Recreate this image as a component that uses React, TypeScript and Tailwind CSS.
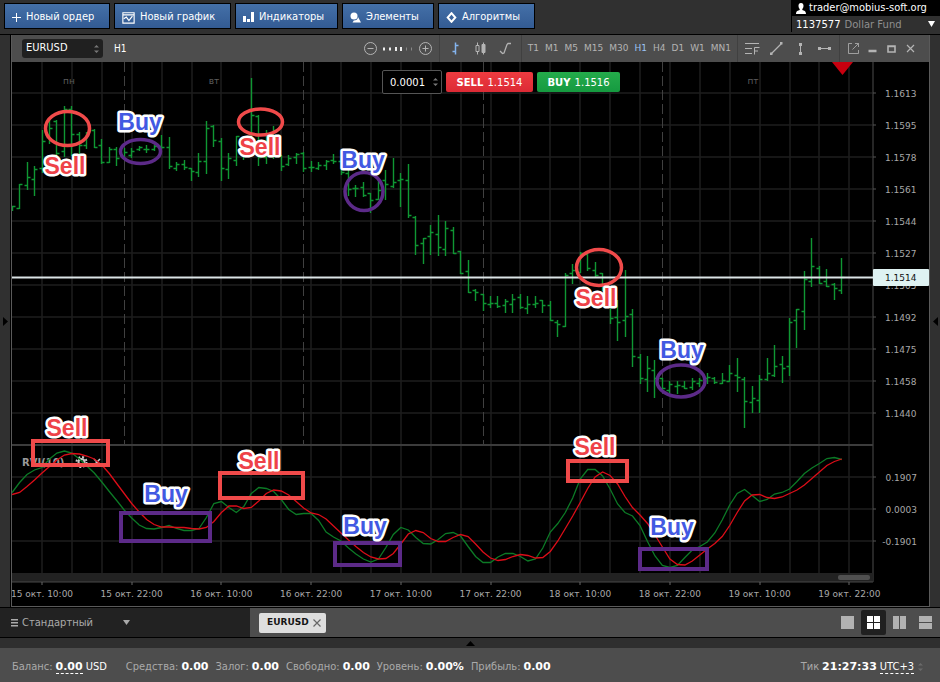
import clsx from 'clsx'
import React from 'react'

type Bar = [open: number, high: number, low: number, close: number]

// Distance between two bars and the x of the first one
const STEP = 7.475
const FIRST_X = 12.1

const bars: Bar[] = [
  [206, 206, 210, 206], [208, 184, 208, 184], [185, 162, 189, 177], [179, 166, 195, 169],
  [168, 130, 172, 141], [137, 120, 143, 128], [121, 120, 155, 153], [151, 106, 156, 109],
  [109, 106, 155, 134], [134, 132, 154, 145], [145, 132, 148, 133], [130, 129, 147, 147],
  [145, 139, 163, 162], [162, 147, 162, 149], [149, 147, 165, 158], [157, 148, 157, 152],
  [155, 148, 157, 151], [149, 146, 150, 147], [149, 145, 152, 149], [149, 145, 150, 146],
  [146, 135, 148, 147], [147, 137, 168, 166], [168, 162, 170, 164], [164, 160, 169, 167],
  [168, 168, 180, 171], [172, 153, 176, 161], [161, 121, 173, 128], [126, 125, 146, 140],
  [141, 138, 180, 168], [169, 153, 178, 158], [160, 136, 165, 136], [143, 143, 159, 150],
  [150, 78, 150, 115], [116, 115, 165, 157], [157, 130, 163, 150], [150, 126, 158, 130],
  [155, 155, 170, 166], [164, 155, 165, 158], [157, 153, 163, 154], [153, 152, 171, 168],
  [167, 161, 171, 167], [168, 162, 169, 165], [165, 160, 169, 161], [160, 154, 163, 161],
  [161, 161, 174, 172], [173, 166, 195, 189], [188, 185, 196, 188], [187, 182, 196, 195],
  [193, 193, 212, 200], [199, 178, 199, 190], [180, 170, 199, 184], [186, 158, 187, 182],
  [180, 173, 206, 179], [180, 164, 217, 215], [217, 216, 254, 245], [243, 238, 263, 238],
  [236, 225, 254, 232], [234, 215, 255, 247], [249, 221, 255, 228], [230, 227, 253, 253],
  [251, 251, 273, 273], [271, 260, 292, 292], [290, 289, 300, 292], [294, 294, 310, 303],
  [304, 296, 307, 303], [303, 296, 307, 306], [305, 299, 312, 301], [304, 294, 312, 299],
  [297, 294, 308, 307], [308, 296, 313, 304], [304, 296, 307, 303], [300, 300, 312, 305],
  [305, 301, 320, 320], [322, 320, 336, 324], [326, 273, 326, 275], [273, 264, 283, 270],
  [272, 252, 272, 253], [254, 252, 270, 268], [270, 262, 276, 275], [273, 273, 290, 288],
  [288, 288, 323, 318], [317, 300, 340, 322], [320, 270, 336, 316], [314, 309, 366, 356],
  [357, 354, 383, 378], [379, 356, 391, 368], [370, 360, 397, 378], [378, 378, 388, 388],
  [390, 381, 392, 384], [386, 381, 393, 385], [386, 381, 388, 388], [387, 378, 389, 381],
  [383, 378, 386, 380], [378, 373, 383, 377], [378, 377, 383, 382], [383, 373, 383, 380],
  [381, 365, 381, 373], [375, 358, 391, 377], [379, 377, 427, 401], [402, 386, 412, 398],
  [400, 375, 412, 379], [379, 358, 380, 373], [375, 345, 376, 366], [364, 356, 382, 368],
  [366, 318, 375, 322], [320, 309, 347, 309], [311, 271, 329, 279], [281, 238, 286, 266],
  [268, 266, 283, 283], [281, 269, 286, 286], [284, 283, 299, 288], [290, 258, 293, 277],
]

const rvi = [
  492.5, 482.5, 474.5, 470, 467.5, 459, 453, 451, 453, 459, 466, 473, 482, 491.5, 500.5, 510,
  518, 525, 528.5, 529, 527.5, 525.5, 528.5, 530.5, 530.5, 528.5, 517.5, 503.5, 501.5, 507.5,
  512.5, 506.5, 493.5, 487.5, 488.5, 491.5, 499.5, 509.5, 514.5, 513.5, 513.5, 520.5, 532, 537,
  541, 548, 554, 559, 562, 559, 547.5, 534.5, 527.5, 530, 537.5, 543.5, 544, 539.5, 533.5,
  532.5, 536, 546.5, 556.5, 562.5, 562.5, 557, 553.5, 553.5, 556.5, 561, 559, 548, 532, 523.5,
  512.5, 498, 479, 469.5, 469.5, 476, 489, 504, 512.5, 516, 525.5, 541.5, 556, 565.5, 567.5,
  565.5, 557.5, 550, 546.5, 542, 533, 520, 505, 493.5, 489.5, 495.5, 501.5, 499.5, 494, 492.5,
  489, 481.5, 473.5, 468, 463.5, 458.5, 457.5, 459.5,
]

const rviSignal = [
  494.5, 492.5, 486.5, 480, 473, 466.5, 460, 455, 453.5, 454, 456, 459, 465, 473.5, 483.5,
  493.5, 503.5, 512, 519.5, 524.5, 527, 527, 527.5, 527.5, 528.5, 529, 527.5, 521.5, 512.5,
  506, 506, 508.5, 507.5, 501, 493.5, 490, 491, 495, 501.5, 508, 513, 514.5, 519, 526, 533,
  540, 546.5, 552.5, 557, 559, 558.5, 553.5, 544, 534, 530.5, 532.5, 538.5, 541.5, 541.5,
  537.5, 534.5, 536.5, 544, 552, 558, 560.5, 559.5, 556.5, 554.5, 555.5, 558, 557.5, 551.5,
  541, 528.5, 516, 502.5, 488.5, 477, 472, 475.5, 484, 496.5, 507.5, 515, 523.5, 535, 547,
  559, 564.5, 565, 561, 555, 549, 543.5, 536.5, 525.5, 512.5, 501, 495, 494.5, 497.5, 498.5,
  497, 493.5, 490, 485, 478.5, 472, 465.5, 461.5, 459,
]

const prices = [
  '1.1613', '1.1595', '1.1578', '1.1561', '1.1544', '1.1527',
  '1.1505', '1.1492', '1.1475', '1.1458', '1.1440',
]
const rviLevels = ['0.1907', '0.0003', '-0.1901']
const dates = [
  '15 окт. 10:00', '15 окт. 22:00', '16 окт. 10:00', '16 окт. 22:00', '17 окт. 10:00',
  '17 окт. 22:00', '18 окт. 10:00', '18 окт. 22:00', '19 окт. 10:00', '19 окт. 22:00',
]
const columns = Array.from({ length: 28 }, (_, i) => Math.round(42 + i * 29.9))
const daySplits = [124, 303, 483, 662]

const RED = '#f04a4a'
const PURPLE = '#5c2a88'

const ellipses = [
  { cx: 67.5, cy: 128.5, rx: 22, ry: 17, color: RED },
  { cx: 140.5, cy: 151.5, rx: 20, ry: 12, color: PURPLE },
  { cx: 260.5, cy: 122, rx: 22, ry: 13, color: RED },
  { cx: 364, cy: 191.5, rx: 19, ry: 19, color: PURPLE },
  { cx: 599, cy: 267.5, rx: 22.5, ry: 18, color: RED },
  { cx: 681, cy: 381, rx: 24, ry: 16, color: PURPLE },
]

const boxes = [
  { x: 33, y: 441, w: 75, h: 24, color: RED },
  { x: 121, y: 513, w: 89, h: 28, color: PURPLE },
  { x: 220, y: 473, w: 83, h: 25, color: RED },
  { x: 335, y: 543, w: 65, h: 22, color: PURPLE },
  { x: 568, y: 461, w: 59, h: 20, color: RED },
  { x: 640, y: 549, w: 67, h: 20, color: PURPLE },
]

const notes = [
  { x: 65, y: 174, text: 'Sell' },
  { x: 140, y: 130, text: 'Buy' },
  { x: 260, y: 155, text: 'Sell' },
  { x: 363, y: 168, text: 'Buy' },
  { x: 596, y: 306, text: 'Sell' },
  { x: 682, y: 358, text: 'Buy' },
  { x: 67, y: 436, text: 'Sell' },
  { x: 166, y: 502, text: 'Buy' },
  { x: 259, y: 469, text: 'Sell' },
  { x: 365, y: 534, text: 'Buy' },
  { x: 595, y: 455, text: 'Sell' },
  { x: 672, y: 535, text: 'Buy' },
]

function toPoints(values: number[]): string {
  return values.map((y, i) => `${(FIRST_X + i * STEP).toFixed(1)},${y}`).join(' ')
}

function toBarPath([open, high, low, close]: Bar, i: number): string {
  const x = Math.round(FIRST_X + i * STEP - 0.5) + 0.5
  return `M${x} ${high}V${low + 1}M${x - 3} ${open + 0.5}H${x}M${x} ${close + 0.5}H${x + 3}`
}

function Chart(): React.JSX.Element {
  return (
    <svg
      viewBox="12 62 917 544"
      className="block h-auto w-full bg-black font-['DejaVu_Sans',sans-serif] text-[9px]"
      role="img"
      aria-label="EURUSD H1"
    >
      <g stroke="#1e1e1e" strokeWidth="1.5">
        {columns.map((x) => (
          <path key={x} d={`M${x} 62V573`} />
        ))}
        {prices.map((p, i) => (
          <path key={p} d={`M12 ${93 + i * 32}H873`} />
        ))}
        {rviLevels.map((p, i) => (
          <path key={p} d={`M12 ${477 + i * 32}H873`} />
        ))}
        <path d="M873 62V582" stroke="#333" />
      </g>
      <g stroke="#404040" strokeDasharray="10 4">
        {daySplits.map((x) => (
          <path key={x} d={`M${x + 0.5} 62V445`} />
        ))}
      </g>
      <g fill="#5c5c5c" textAnchor="middle">
        <text x="69" y="84">пн</text>
        <text x="214" y="84">вт</text>
        <text x="753" y="84">пт</text>
      </g>

      <path d="M12 445H873" stroke="#3c3c3c" strokeWidth="2" />
      <rect x="12" y="573" width="861" height="9" fill="#222" />
      <path d="M12 582H873" stroke="#484848" />
      <rect x="838" y="575" width="32" height="5" rx="2" fill="#505050" />

      <path d={bars.map(toBarPath).join('')} fill="none" stroke="#0f9733" strokeWidth="1.4" />
      <path d="M12 277.5H873" stroke="#dbe4e6" strokeWidth="2" />

      <g fill="#9a9a9a">
        <text x="22" y="466" fontSize="10" fontWeight="bold">RVI(10)</text>
        <circle cx="81.5" cy="462" r="3" fill="none" stroke="#c8c8c8" strokeWidth="2" />
        <circle cx="81.5" cy="462" r="5" fill="none" stroke="#c8c8c8" strokeWidth="2" strokeDasharray="2 1.93" />
        <path d="M94 459l6 6M100 459l-6 6" stroke="#c8c8c8" strokeWidth="1.5" />
      </g>
      <g fill="none" strokeWidth="1.3">
        <polyline points={toPoints(rvi)} stroke="#0c7a26" />
        <polyline points={toPoints(rviSignal)} stroke="#dc0d18" />
      </g>

      <g fill="#a8a8a8" stroke="none">
        {prices.map((p, i) => (
          <g key={p}>
            <text x="885" y={97 + i * 32}>{p}</text>
            <path d={`M873 ${93 + i * 32}h3`} stroke="#555" />
          </g>
        ))}
        {rviLevels.map((p, i) => (
          <g key={p}>
            <text x="917" y={481 + i * 32} textAnchor="end">{p}</text>
            <path d={`M873 ${477 + i * 32}h3`} stroke="#555" />
          </g>
        ))}
        {dates.map((d, i) => (
          <g key={d}>
            <text x={42 + i * 89.7} y="597" textAnchor="middle">{d}</text>
            <path d={`M${Math.round(42 + i * 89.7)} 582v3`} stroke="#666" />
          </g>
        ))}
      </g>
      <rect x="873" y="269" width="56" height="17" rx="1" fill="#dff2f2" />
      <text x="885" y="281" fill="#111">1.1514</text>
      <path d="M832 62H853L842.5 75Z" fill="#c8000f" />

      <g fill="none" strokeWidth="3.5">
        {ellipses.map(({ color, ...e }) => (
          <ellipse key={e.cx} {...e} stroke={color} />
        ))}
      </g>
      <g fill="none" strokeWidth="4">
        {boxes.map((b) => (
          <rect key={b.x} x={b.x} y={b.y} width={b.w} height={b.h} stroke={b.color} />
        ))}
      </g>
      <g
        className="font-['Liberation_Sans',Arial,sans-serif] text-[23px] font-bold"
        textAnchor="middle"
        stroke="#fff"
        strokeWidth="5"
        strokeLinejoin="round"
        paintOrder="stroke"
      >
        {notes.map((n) => (
          <text key={n.x} x={n.x} y={n.y} fill={n.text === 'Sell' ? '#ee4248' : '#4259e2'}>
            {n.text}
          </text>
        ))}
      </g>
    </svg>
  )
}

interface IconProps {
  children: React.ReactNode
  size?: string
}

function Icon({ children, size = 'size-[15px]' }: IconProps): React.JSX.Element {
  return (
    <svg viewBox="0 0 15 15" className={clsx('shrink-0', size)} fill="none" stroke="currentColor" aria-hidden="true">
      {children}
    </svg>
  )
}

function Spinner({ className }: { className?: string }): React.JSX.Element {
  return (
    <svg viewBox="0 0 5 10" className={clsx('h-[10px] w-[5px]', className)} fill="currentColor" aria-hidden="true">
      <path d="M0 3.5L2.5 1L5 3.5zM0 6.5L2.5 9L5 6.5z" />
    </svg>
  )
}

const actions = [
  {
    label: 'Новый ордер',
    width: 'w-[106px]',
    icon: <svg viewBox="0 0 9 9" className="size-[9px]" stroke="currentColor"><path d="M4.5 0V9M0 4.5H9" /></svg>,
  },
  {
    label: 'Новый график',
    width: 'w-[117px]',
    icon: (
      <Icon size="size-[13px]">
        <path d="M1 2H14V14H1zM1 4.5H14" strokeWidth="1.3" />
        <path d="M2 9L5 7L8 11L12 6" strokeWidth="1.4" />
      </Icon>
    ),
  },
  {
    label: 'Индикаторы',
    width: 'w-[103px]',
    icon: (
      <svg viewBox="0 0 11 10" className="h-[10px] w-[11px]" fill="currentColor">
        <path d="M0 4H3V10H0zM4 7H7V10H4zM8 0H11V10H8z" />
      </svg>
    ),
  },
  {
    label: 'Элементы',
    width: 'w-[92px]',
    icon: (
      <svg viewBox="0 0 11 11" className="size-[11px]" fill="currentColor">
        <circle cx="4" cy="4" r="3.5" />
        <path d="M8 5L11 10.5H2.5L3.8 8.5C6 8.500 8 7.500 8 5z" />
      </svg>
    ),
  },
  {
    label: 'Алгоритмы',
    width: 'w-[97px]',
    icon: (
      <svg viewBox="0 0 11 11" className="size-[11px]" fill="none" stroke="currentColor" strokeWidth="2">
        <path d="M5.5 1.2L9.3 5.5L5.5 9.8L1.7 5.5z" />
      </svg>
    ),
  },
]

function Header(): React.JSX.Element {
  return (
    <header className="flex h-[34px] items-start justify-between bg-[#303030]">
      <nav className="flex gap-1 pt-[3px] pl-1">
        {actions.map((a) => (
          <button
            key={a.label}
            type="button"
            className={clsx(
              'flex h-[26px] items-center gap-[5px] border border-black bg-linear-to-b from-[#4470a8] to-[#335b93] pt-[2px] pl-[7px] text-[11px] whitespace-nowrap text-white',
              a.width,
            )}
          >
            {a.icon}
            {a.label}
          </button>
        ))}
      </nav>
      <div className="w-[149px] border-l border-black">
        <div className="flex h-4 items-center gap-[3px] bg-black pt-px pl-1 text-[11px] text-white">
          <svg viewBox="0 0 10 11" className="h-[11px] w-[10px] shrink-0" fill="currentColor">
            <path d="M5 0C7 0 7.6 1.5 7.5 3C7.4 4.5 6.8 5.5 6.3 6V7C8 7.5 10 8 10 11H0C0 8 2 7.5 3.7 7V6C3.2 5.5 2.6 4.5 2.5 3C2.4 1.5 3 0 5 0z" />
          </svg>
          trader@mobius-soft.org
        </div>
        <button type="button" className="flex h-4 w-full items-center gap-1 pr-[5px] pl-1 font-['DejaVu_Sans',sans-serif] text-[10px]">
          <span className="text-white">1137577</span>
          <span className="text-[#8f8f8f]">Dollar Fund</span>
          <svg viewBox="0 0 7 6" className="ml-auto h-[6px] w-[7px]" fill="#fff"><path d="M0 0H7L3.5 6z" /></svg>
        </button>
      </div>
    </header>
  )
}

const timeframes = ['T1', 'M1', 'M5', 'M15', 'M30', 'H1', 'H4', 'D1', 'W1', 'MN1']

const tools = [
  {
    name: 'Фибоначчи',
    icon: <path d="M0 2.5H14M0 7.5H7M0 12.5H7M9.5 13.5V6.5H14.5M9.5 10H13" />,
  },
  {
    name: 'Линия',
    icon: (
      <>
        <path d="M2.5 12.5L12.5 2.5" strokeWidth="1.3" />
        <path d="M1 11.5H3.500V14H1zM11 1H13.500V3.500H11z" fill="currentColor" stroke="none" />
      </>
    ),
  },
  {
    name: 'Вертикаль',
    icon: (
      <>
        <path d="M7.5 3V12" />
        <path d="M6 2H9V5H6zM6 11H9V14H6z" fill="currentColor" stroke="none" />
      </>
    ),
  },
  {
    name: 'Горизонталь',
    icon: (
      <>
        <path d="M2 7.5H13" />
        <path d="M1 6H4V9H1zM11 6H14V9H11z" fill="currentColor" stroke="none" />
      </>
    ),
  },
]

const windowControls = [
  { name: 'Открепить', icon: <path d="M6 2.5H2.5V12.5H12.5V9M6.5 8.5L12.5 2.5M9 2.5H12.5V6" opacity=".8" /> },
  { name: 'Свернуть', icon: <path d="M3.5 10H11.5" strokeWidth="2.5" /> },
  { name: 'Развернуть', icon: <path d="M4 5H11V11H4zM4 5.5H11" strokeWidth="1.6" /> },
  { name: 'Закрыть', icon: <path d="M4 4L11 11M11 4L4 11" strokeWidth="1.2" /> },
]

function Toolbar(): React.JSX.Element {
  return (
    <div className="flex h-[27px] items-center bg-[#4d4d4d] pr-[11px] pl-[10px] text-[#b4b4b4]">
      <div className="relative">
        <select
          aria-label="Инструмент"
          className="block h-[19px] w-[81px] appearance-none rounded-[3px] bg-[#202020] pl-[4px] text-[11px] text-white"
        >
          <option>EURUSD</option>
        </select>
        <Spinner className="pointer-events-none absolute top-[5px] right-[4px] text-[#777]" />
      </div>
      <span className="ml-[11px] text-[10px] text-white">H1</span>

      <div className="ml-auto flex h-full items-center">
        <button type="button" aria-label="Уменьшить">
          <Icon>
            <circle cx="7.5" cy="7.5" r="6" />
            <path d="M4.5 7.5H10.5" />
          </Icon>
        </button>
        <svg viewBox="0 0 30 4" className="mx-[5px] h-1 w-[30px]" fill="#eee" aria-hidden="true">
          <path d="M0 .5h2v3H0zM6 .5h2v3H6zM12 0h2v4h-2zM17 0h2v4h-2z" />
          <path d="M23 .5h1v3h-1zM28 .5h1v3h-1z" fill="#888" />
        </svg>
        <button type="button" aria-label="Увеличить">
          <Icon>
            <circle cx="7.5" cy="7.5" r="6" />
            <path d="M4.5 7.5H10.5M7.5 4.5V10.5" />
          </Icon>
        </button>
        <div className="ml-[6px] flex h-full items-center gap-[10px] border-x border-[#404040] px-2">
          <button type="button" aria-label="Бары" className="text-[#84b4ee]">
            <Icon><path d="M7.5 1.5V13.5M4.5 10.5H7.5M7.5 4.5H10.5" strokeWidth="1.5" /></Icon>
          </button>
          <button type="button" aria-label="Свечи">
            <Icon>
              <path d="M4.5 1.5V13.5M10.5 1.5V13.5" />
              <path d="M3 4.5H6V10.5H3z" fill="#4d4d4d" />
              <path d="M9 3.5H12V11.5H9z" fill="currentColor" />
            </Icon>
          </button>
          <button type="button" aria-label="Линия">
            <Icon><path d="M2 10L4.500 12.500L6 12L9 3.500L10 2.500H13" strokeWidth="1.3" /></Icon>
          </button>
        </div>
        <div className="flex h-full items-center gap-[6px] px-[6px] font-['DejaVu_Sans',sans-serif] text-[9px]">
          {timeframes.map((t) => (
            <button key={t} type="button" className={clsx(t === 'H1' && 'text-[#9cc4f4]')}>
              {t}
            </button>
          ))}
        </div>
        <div className="flex h-full items-center gap-[9px] border-x border-[#404040] px-[7px]">
          {tools.map((t) => (
            <button key={t.name} type="button" aria-label={t.name}>
              <Icon>{t.icon}</Icon>
            </button>
          ))}
        </div>
        <div className="ml-[6px] flex items-center gap-1">
          {windowControls.map((w) => (
            <button key={w.name} type="button" aria-label={w.name}>
              <Icon>{w.icon}</Icon>
            </button>
          ))}
        </div>
      </div>
    </div>
  )
}

function OrderPanel(): React.JSX.Element {
  return (
    <div className="absolute top-2 left-[370px] flex items-center gap-1 font-['DejaVu_Sans',sans-serif] text-[10px] text-white">
      <div className="relative">
        <input
          aria-label="Объём"
          defaultValue="0.0001"
          className="block h-6 w-[60px] rounded-[2px] border border-[#555] bg-black pl-[7px]"
        />
        <Spinner className="pointer-events-none absolute top-[7px] right-[4px] text-[#777]" />
      </div>
      <button type="button" className="h-5 w-[87px] rounded-[2px] bg-linear-to-b from-[#ee3b40] to-[#dc2a35]">
        <b className="mr-px">SELL</b> 1.1514
      </button>
      <button type="button" className="h-5 w-[83px] rounded-[2px] bg-linear-to-b from-[#24ab4b] to-[#159a40]">
        <b className="mr-px">BUY</b> 1.1516
      </button>
    </div>
  )
}

const layouts = [
  { name: 'Одно окно', path: 'M0 0H13V13H0z' },
  { name: 'Сетка', path: 'M0 0H6V6H0zM7 0H13V6H7zM0 7H6V13H0zM7 7H13V13H7z' },
  { name: 'Колонки', path: 'M0 0H6V13H0zM7 0H13V13H7z' },
  { name: 'Строки', path: 'M0 0H13V6H0zM0 7H13V13H0z' },
]

function TabBar(): React.JSX.Element {
  return (
    <div className="flex h-[29px] items-center bg-[#4d4d4d]">
      <label className="relative flex h-full w-[250px] items-center gap-1 bg-[#222] pl-[11px] text-[#aaa]">
        <svg viewBox="0 0 7 8" className="h-2 w-[7px]" fill="currentColor" aria-hidden="true">
          <path d="M0 0H7V1.500H0zM0 3H7V4.500H0zM0 6H7V7.500H0z" />
        </svg>
        <select aria-label="Рабочее пространство" className="w-[110px] appearance-none bg-[#222] pt-px text-[11px]">
          <option>Стандартный</option>
        </select>
        <svg viewBox="0 0 7 5" className="pointer-events-none absolute left-[123px] h-[5px] w-[7px]" fill="currentColor">
          <path d="M0 0H7L3.5 5z" />
        </svg>
      </label>
      <button
        type="button"
        className="ml-[9px] flex h-5 w-[67px] items-center justify-between rounded-[2px] bg-[#dedede] px-[5px] font-['DejaVu_Sans',sans-serif] text-[9px] font-bold text-[#151515]"
      >
        <span className="pt-px pl-[3px]">EURUSD</span>
        <svg viewBox="0 0 8 8" className="size-2" stroke="#666" strokeWidth="1.2"><path d="M.5 .5L7.5 7.5M7.5 .5L.5 7.5" /></svg>
      </button>
      <div className="ml-auto flex items-center gap-px pr-[2px]">
        {layouts.map((l, i) => (
          <button
            key={l.name}
            type="button"
            aria-label={l.name}
            className={clsx(
              'grid size-[25px] place-items-center rounded-[2px]',
              i === 1 ? 'bg-[#202020] text-white' : 'text-[#b2b2b2]',
            )}
          >
            <svg viewBox="0 0 13 13" className="size-[13px]" fill="currentColor"><path d={l.path} /></svg>
          </button>
        ))}
      </div>
    </div>
  )
}

const account = [
  { label: 'Средства:', value: '0.00' },
  { label: 'Залог:', value: '0.00' },
  { label: 'Свободно:', value: '0.00' },
  { label: 'Уровень:', value: '0.00%' },
  { label: 'Прибыль:', value: '0.00' },
]

function StatusBar(): React.JSX.Element {
  const number = "font-['DejaVu_Sans',sans-serif] font-bold text-white"

  return (
    <footer className="flex h-[34px] items-center justify-between bg-[#4d4d4d] pt-[3px] pr-[17px] pl-3 text-[11px] leading-[13px] text-[#aaa]">
      <div className="flex items-baseline gap-[7px]">
        <div className="mr-3 flex items-baseline gap-[3px]">
          Баланс:
          <span className={clsx(number, 'border-b border-dashed border-white')}>0.00</span>
          <span className="text-white">USD</span>
        </div>
        {account.map((a) => (
          <div key={a.label} className="flex items-baseline gap-[3px]">
            {a.label}
            <span className={number}>{a.value}</span>
          </div>
        ))}
      </div>
      <div className="flex items-baseline gap-[3px]">
        Тик
        <span className={number}>21:27:33</span>
        <button type="button" className="flex items-center gap-1 text-white">
          <span className="border-b border-dashed border-white">UTC+3</span>
          <Spinner className="text-[#6a6a6a]" />
        </button>
      </div>
    </footer>
  )
}

export default function App(): React.JSX.Element {
  return (
    <div className="flex w-full flex-col gap-px bg-black font-['DejaVu_Sans_Condensed','DejaVu_Sans',sans-serif]">
      <Header />
      <main className="flex">
        <button type="button" aria-label="Левая панель" className="flex w-[11px] items-center border-r border-black bg-[#303030] pl-[3px]">
          <svg viewBox="0 0 5 9" className="h-[9px] w-[5px]"><path d="M0 0V9L5 4.5z" /></svg>
        </button>
        <section className="min-w-0 flex-1 border-x border-b border-[#5a5a5a]">
          <Toolbar />
          <div className="relative">
            <Chart />
            <OrderPanel />
          </div>
        </section>
        <button type="button" aria-label="Правая панель" className="flex w-[10px] items-center justify-end bg-[#303030] pr-[2px]">
          <svg viewBox="0 0 5 9" className="h-[9px] w-[5px]"><path d="M5 0V9L0 4.5z" /></svg>
        </button>
      </main>
      <TabBar />
      <div>
        <button type="button" aria-label="Нижняя панель" className="grid h-[10px] w-full place-items-center bg-[#2f2f2f]">
          <svg viewBox="0 0 9 5" className="h-[5px] w-[9px]"><path d="M0 5H9L4.5 0z" /></svg>
        </button>
        <StatusBar />
      </div>
    </div>
  )
}
